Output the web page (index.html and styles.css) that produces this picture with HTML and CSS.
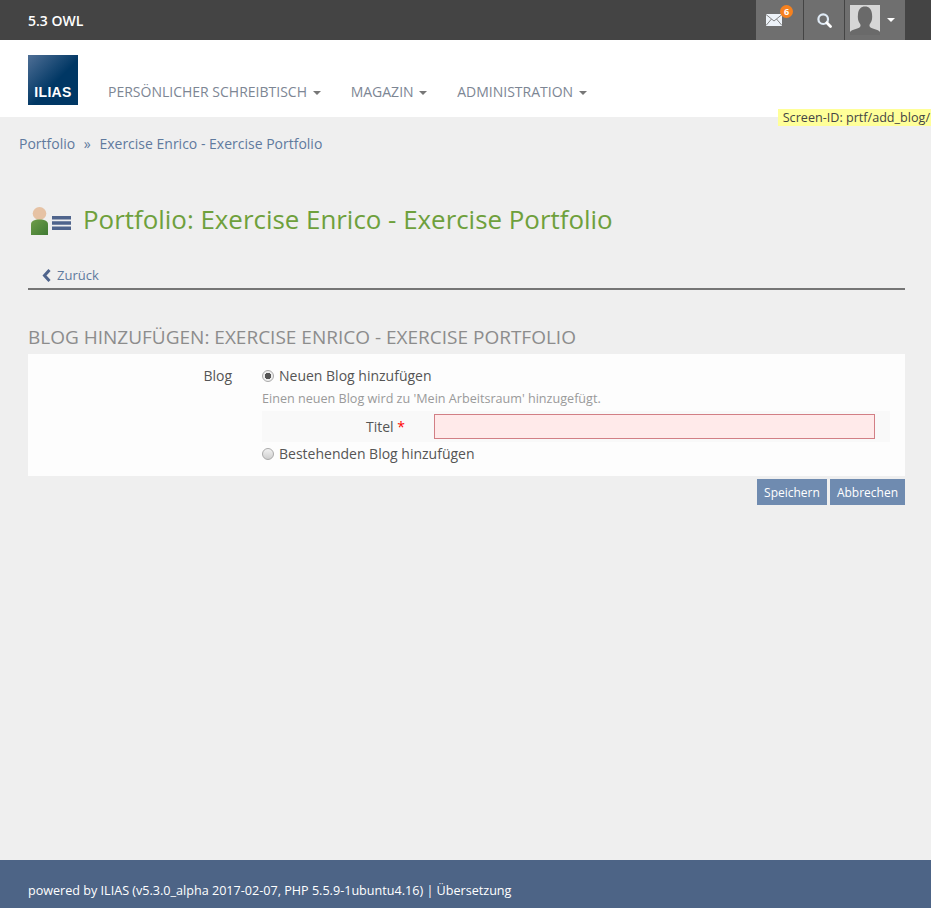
FILE: index.html
```html
<!DOCTYPE html>
<html lang="de">
<head>
    <meta charset="UTF-8">
    <title>Portfolio: Exercise Enrico - Exercise Portfolio</title>
    <link rel="stylesheet" href="styles.css">
</head>
<body>
    <div class="topbar">
        <span class="install-name">5.3 OWL</span>
        <div class="top-actions">
            <a class="top-btn mail-btn" href="#">
                <svg width="16" height="12" viewBox="0 0 16 12"><rect width="16" height="12" fill="#edf2f8"/><path d="M0 .5 8 7l8-6.500M0 11.500 5.500 5M16 11.500 10.500 5" fill="none" stroke="#777" stroke-width=".9"/></svg>
                <span class="badge">6</span>
            </a>
            <a class="top-btn search-btn" href="#">
                <svg width="15" height="15" viewBox="0 0 15 15"><circle cx="6.200" cy="6.200" r="4.800" fill="none" stroke="#dfeaf5" stroke-width="2.200"/><path d="M9.800 9.800 13.500 13.500" stroke="#fff" stroke-width="2.800" stroke-linecap="round"/></svg>
            </a>
            <a class="top-btn user-btn" href="#">
                <svg class="avatar" width="30" height="30" viewBox="0 0 30 30"><rect width="30" height="30" fill="#d6d6d6"/><path d="M0 30v-3c2-3 8-3 10-5 1-1 .5-3-.500-4-1.500-2-2-5-1.500-9C8.500 4 11 1.500 15 1.500S21.500 4 22 9c.500 4 0 7-1.500 9-1 1-1.500 3-.500 4 2 2 8 2 10 5v3z" fill="#6a6a6a"/></svg>
                <span class="caret caret-light"></span>
            </a>
        </div>
    </div>

    <div class="mainbar">
        <div class="logo"><span>ILIAS</span></div>
        <ul class="nav">
            <li>Persönlicher Schreibtisch <span class="caret"></span></li>
            <li>Magazin <span class="caret"></span></li>
            <li>Administration <span class="caret"></span></li>
        </ul>
        <div class="screen-id">Screen-ID: prtf/add_blog/</div>
    </div>

    <div class="content">
        <div class="breadcrumb">
            <a href="#">Portfolio</a>
            <span class="sep">»</span>
            <a href="#">Exercise Enrico - Exercise Portfolio</a>
        </div>

        <div class="page-head">
            <svg class="head-icon" width="42" height="30" viewBox="0 0 42 30">
                <defs><linearGradient id="body" x1="0" y1="0" x2="1" y2="1"><stop offset="0" stop-color="#6f9d4a"/><stop offset="1" stop-color="#3f7a32"/></linearGradient></defs>
                <ellipse cx="8.500" cy="8.500" rx="6.800" ry="6.500" fill="#e6c2a4"/>
                <path d="M0 30V19.500c0-3.500 3-5 8.500-5s8.500 1.500 8.500 5V30z" fill="url(#body)"/>
                <rect x="21" y="11" width="19" height="3.500" fill="#4f648c"/>
                <rect x="21" y="16.250" width="19" height="3.500" fill="#4f648c"/>
                <rect x="21" y="21.500" width="19" height="3.500" fill="#4f648c"/>
            </svg>
            <h1>Portfolio: Exercise Enrico - Exercise Portfolio</h1>
        </div>

        <div class="tabs">
            <a href="#" class="back-link">
                <svg width="10" height="13" viewBox="0 0 10 13"><path d="M7.500 1 2.500 6.500l5 5.500" fill="none" stroke="#4f648c" stroke-width="3"/></svg>
                Zurück
            </a>
        </div>

        <h2 class="form-title">Blog hinzufügen: Exercise Enrico - Exercise Portfolio</h2>

        <form class="form-box">
            <div class="form-row">
                <div class="form-label">Blog</div>
                <div class="form-field">
                    <label class="radio-line"><input type="radio" name="blog" checked> Neuen Blog hinzufügen</label>
                    <div class="help">Einen neuen Blog wird zu 'Mein Arbeitsraum' hinzugefügt.</div>
                    <div class="sub-row">
                        <label class="sub-label">Titel <span class="req">*</span></label>
                        <input class="text-input" type="text">
                    </div>
                    <label class="radio-line last-radio"><input type="radio" name="blog"> Bestehenden Blog hinzufügen</label>
                </div>
            </div>
        </form>
        <div class="form-buttons">
            <button type="button" class="btn">Speichern</button>
            <button type="button" class="btn">Abbrechen</button>
        </div>
    </div>

    <div class="footer">
        powered by ILIAS (v5.3.0_alpha 2017-02-07, <a href="#">PHP 5.5.9-1ubuntu4.16</a>) | <a href="#">Übersetzung</a>
    </div>
</body>
</html>
```

FILE: styles.css
```css
html, body {
    height: 100%;
}
body {
    margin: 0;
    font-family: "Open Sans", "Liberation Sans", sans-serif;
    font-size: 14px;
    color: #555;
    background-color: #efefef;
    display: flex;
    flex-direction: column;
}
a {
    text-decoration: none;
    color: #5f7a9e;
}

/* top bar */
.topbar {
    height: 40px;
    flex: none;
    background-color: #444;
    display: flex;
    align-items: center;
    justify-content: space-between;
    padding: 0 26px 0 28px;
}
.install-name {
    color: white;
    font-weight: 600;
    font-size: 14px;
}
.top-actions {
    display: flex;
    height: 100%;
    gap: 1px;
}
.top-btn {
    position: relative;
    background-color: #6f6f6f;
    display: flex;
    align-items: center;
    justify-content: center;
    height: 40px;
}
.mail-btn {
    width: 47px;
    padding-right: 12px;
    box-sizing: border-box;
}
.search-btn {
    width: 40px;
}
.user-btn {
    width: 60px;
    justify-content: flex-start;
    padding-left: 5px;
    box-sizing: border-box;
    gap: 7px;
}
.badge {
    position: absolute;
    top: 5px;
    left: 24px;
    width: 13px;
    height: 13px;
    border-radius: 50%;
    background-color: #f5811f;
    color: white;
    font-size: 9px;
    font-weight: 700;
    line-height: 13px;
    text-align: center;
}
.caret {
    display: inline-block;
    width: 0;
    height: 0;
    margin-left: 2px;
    vertical-align: middle;
    border-top: 4px solid #777;
    border-left: 4px solid transparent;
    border-right: 4px solid transparent;
}
.caret-light {
    border-top-color: white;
    margin-left: 0;
}

/* logo + menu */
.mainbar {
    position: relative;
    flex: none;
    height: 77px;
    background-color: white;
    display: flex;
    padding-left: 28px;
    box-sizing: border-box;
}
.logo {
    width: 50px;
    height: 50px;
    margin-top: 15px;
    background: linear-gradient(135deg, #4f6f96 0%, #003764 55%);
    display: flex;
    align-items: flex-end;
    justify-content: center;
}
.logo span {
    color: white;
    font-family: "Liberation Sans", Arial, sans-serif;
    font-weight: 700;
    font-size: 14px;
    letter-spacing: .3px;
    line-height: 26px;
}
.nav {
    list-style: none;
    margin: 0 0 0 30px;
    padding: 0;
    display: flex;
    gap: 30px;
}
.nav li {
    margin-top: 42px;
    line-height: 20px;
    font-size: 14px;
    text-transform: uppercase;
    color: #7d8694;
}
.screen-id {
    position: absolute;
    right: 0;
    bottom: -9px;
    background-color: #ffff99;
    color: #444;
    font-size: 12.600px;
    line-height: 17px;
    padding: 0 1px 0 5px;
    white-space: nowrap;
}

/* content */
.content {
    flex: 1;
    padding: 0 26px 0 28px;
}
.breadcrumb {
    margin: 17px 0 0 -9px;
    line-height: 20px;
}
.breadcrumb .sep {
    color: #5f7a9e;
    margin: 0 5px;
}
.page-head {
    display: flex;
    align-items: center;
    margin-top: 46px;
    height: 38px;
}
.head-icon {
    margin: 2px 10px 0 3px;
}
.page-head h1 {
    margin: 0;
    font-size: 25.900px;
    font-weight: 400;
    color: #6ea03c;
    white-space: nowrap;
}
.tabs {
    margin-top: 25px;
    height: 25px;
    border-bottom: 2px solid #757575;
    padding-left: 14px;
}
.back-link {
    font-size: 13px;
    line-height: 24px;
    display: inline-flex;
    align-items: center;
    gap: 5px;
}
.form-title {
    margin: 33px 0 0;
    font-size: 19px;
    line-height: 28px;
    font-weight: 400;
    text-transform: uppercase;
    color: #8c8c8c;
}
.form-box {
    margin-top: 3px;
    background-color: #fdfdfd;
    padding: 12px 15px 12px 0;
}
.form-row {
    display: flex;
}
.form-label {
    width: 204px;
    text-align: right;
    line-height: 20px;
    flex: none;
}
.form-field {
    margin-left: 30px;
    flex: 1;
}
.radio-line {
    display: flex;
    align-items: center;
    gap: 5px;
    line-height: 20px;
}
.last-radio {
    margin-top: 2px;
}
/* the old grey radio look, native ones come out blue */
.radio-line input {
    appearance: none;
    margin: 0;
    width: 12px;
    height: 12px;
    border-radius: 50%;
    border: 1px solid #aaa;
    background: linear-gradient(#f2f2f2, #cfcfcf);
    box-sizing: border-box;
}
.radio-line input:checked {
    background: radial-gradient(circle, #555 0, #555 3px, #eee 3.500px);
}
.help {
    font-size: 12.600px;
    color: #9a9a9a;
    line-height: 16px;
    margin-top: 5px;
}
.sub-row {
    display: flex;
    align-items: center;
    background-color: #f9f9f9;
    margin-top: 4px;
    height: 31px;
    padding-left: 104px;
    padding-right: 15px;
}
.sub-label {
    margin-right: 29px;
    white-space: nowrap;
}
.req {
    color: red;
}
.text-input {
    flex: 1;
    min-width: 0;
    height: 25px;
    box-sizing: border-box;
    background-color: #ffeaea;
    border: 1px solid #d27f85;
    padding: 0 5px;
}
.form-buttons {
    display: flex;
    justify-content: flex-end;
    gap: 3px;
    margin-top: 3px;
}
.btn {
    background-color: #6f8bb0;
    color: white;
    border: none;
    font-family: inherit;
    font-size: 12px;
    height: 26px;
    padding: 0 7px;
}

/* footer */
.footer {
    flex: none;
    height: 48px;
    background-color: #4d6486;
    color: white;
    font-size: 12.600px;
    line-height: 62px;
    padding-left: 28px;
    overflow: hidden;
    white-space: nowrap;
}
.footer a {
    color: white;
}
```
